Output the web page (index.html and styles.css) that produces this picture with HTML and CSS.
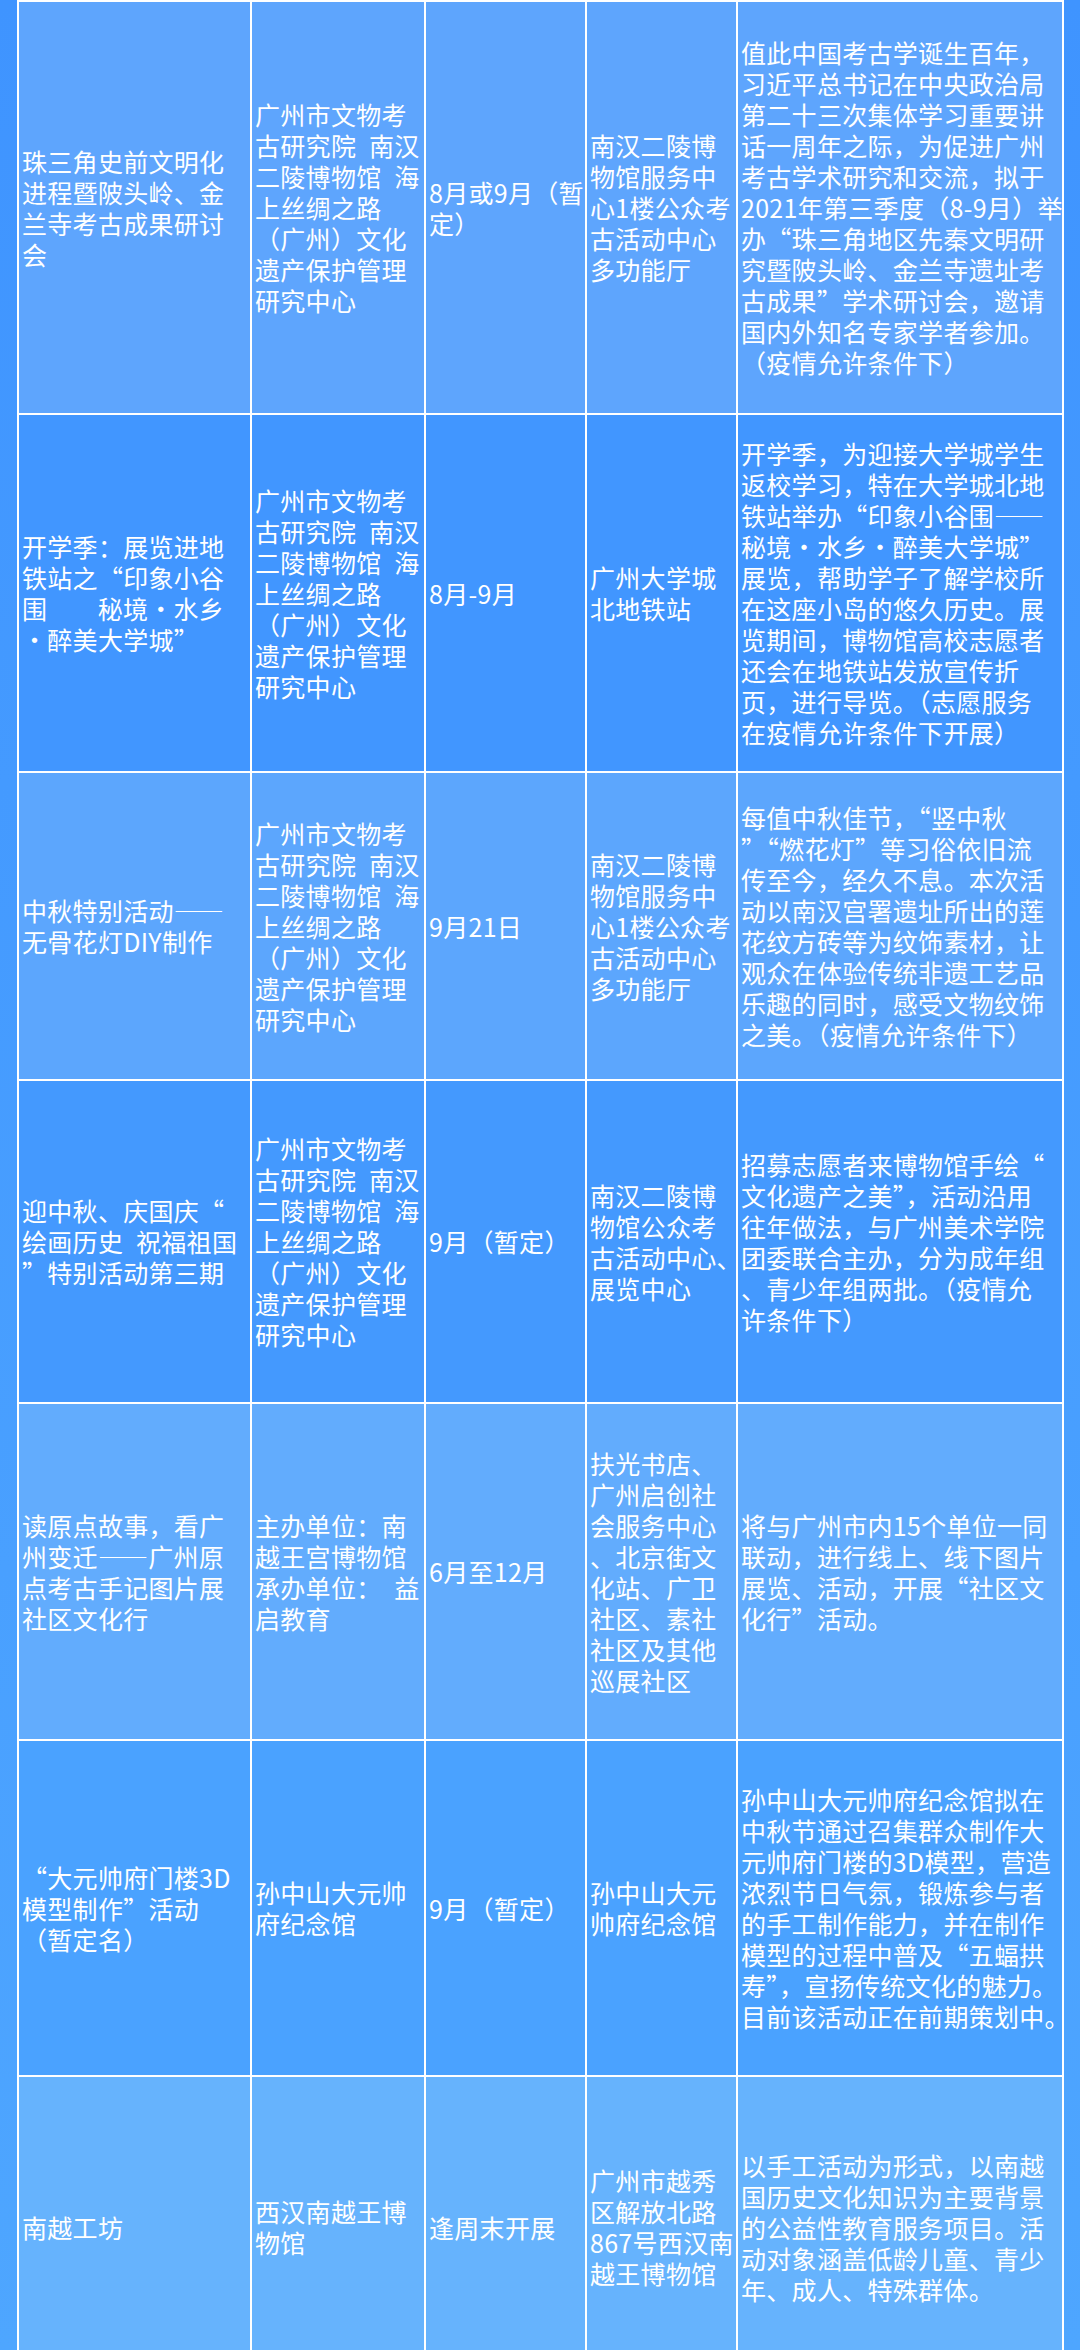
FILE: index.html
```html
<!DOCTYPE html>
<html lang="zh-CN">
<head>
<meta charset="utf-8">
<title>活动计划表</title>
<link rel="stylesheet" href="styles.css">
</head>
<body>
<div class="sheet">
  <div class="row r1">
    <div class="cell"><p>珠三角史前文明化<br>进程暨陂头岭、金<br>兰寺考古成果研讨<br>会</p></div>
    <div class="cell"><p>广州市文物考<br>古研究院&ensp;南汉<br>二陵博物馆&ensp;海<br>上丝绸之路<br>（广州）文化<br>遗产保护管理<br>研究中心</p></div>
    <div class="cell"><p>8月或9月（暂<br>定）</p></div>
    <div class="cell"><p>南汉二陵博<br>物馆服务中<br>心1楼公众考<br>古活动中心<br>多功能厅</p></div>
    <div class="cell"><p>值此中国考古学诞生百年，<br>习近平总书记在中央政治局<br>第二十三次集体学习重要讲<br>话一周年之际，为促进广州<br>考古学术研究和交流，拟于<br>2021年第三季度（8-9月）举<br>办“珠三角地区先秦文明研<br>究暨陂头岭、金兰寺遗址考<br>古成果”学术研讨会，邀请<br>国内外知名专家学者参加。<br>（疫情允许条件下）</p></div>
  </div>
  <div class="row r2">
    <div class="cell"><p>开学季：展览进地<br>铁站之“印象小谷<br>围<span class="blank">——</span>秘境・水乡<br>・醉美大学城”</p></div>
    <div class="cell"><p>广州市文物考<br>古研究院&ensp;南汉<br>二陵博物馆&ensp;海<br>上丝绸之路<br>（广州）文化<br>遗产保护管理<br>研究中心</p></div>
    <div class="cell"><p>8月-9月</p></div>
    <div class="cell"><p>广州大学城<br>北地铁站</p></div>
    <div class="cell"><p>开学季，为迎接大学城学生<br>返校学习，特在大学城北地<br>铁站举办“印象小谷围——<br>秘境・水乡・醉美大学城”<br>展览，帮助学子了解学校所<br>在这座小岛的悠久历史。展<br>览期间，博物馆高校志愿者<br>还会在地铁站发放宣传折<br>页，进行导览。（志愿服务<br>在疫情允许条件下开展）</p></div>
  </div>
  <div class="row r3">
    <div class="cell"><p>中秋特别活动——<br>无骨花灯DIY制作</p></div>
    <div class="cell"><p>广州市文物考<br>古研究院&ensp;南汉<br>二陵博物馆&ensp;海<br>上丝绸之路<br>（广州）文化<br>遗产保护管理<br>研究中心</p></div>
    <div class="cell"><p>9月21日</p></div>
    <div class="cell"><p>南汉二陵博<br>物馆服务中<br>心1楼公众考<br>古活动中心<br>多功能厅</p></div>
    <div class="cell"><p>每值中秋佳节，“竖中秋<br>”“燃花灯”等习俗依旧流<br>传至今，经久不息。本次活<br>动以南汉宫署遗址所出的莲<br>花纹方砖等为纹饰素材，让<br>观众在体验传统非遗工艺品<br>乐趣的同时，感受文物纹饰<br>之美。（疫情允许条件下）</p></div>
  </div>
  <div class="row r4">
    <div class="cell"><p>迎中秋、庆国庆“<br>绘画历史&ensp;祝福祖国<br>”特别活动第三期</p></div>
    <div class="cell"><p>广州市文物考<br>古研究院&ensp;南汉<br>二陵博物馆&ensp;海<br>上丝绸之路<br>（广州）文化<br>遗产保护管理<br>研究中心</p></div>
    <div class="cell"><p>9月（暂定）</p></div>
    <div class="cell"><p>南汉二陵博<br>物馆公众考<br>古活动中心、<br>展览中心</p></div>
    <div class="cell"><p>招募志愿者来博物馆手绘“<br>文化遗产之美”，活动沿用<br>往年做法，与广州美术学院<br>团委联合主办，分为成年组<br>、青少年组两批。（疫情允<br>许条件下）</p></div>
  </div>
  <div class="row r5">
    <div class="cell"><p>读原点故事，看广<br>州变迁——广州原<br>点考古手记图片展<br>社区文化行</p></div>
    <div class="cell"><p>主办单位：南<br>越王宫博物馆<br>承办单位：&ensp;益<br>启教育</p></div>
    <div class="cell"><p>6月至12月</p></div>
    <div class="cell"><p>扶光书店、<br>广州启创社<br>会服务中心<br>、北京街文<br>化站、广卫<br>社区、素社<br>社区及其他<br>巡展社区</p></div>
    <div class="cell"><p>将与广州市内15个单位一同<br>联动，进行线上、线下图片<br>展览、活动，开展“社区文<br>化行”活动。</p></div>
  </div>
  <div class="row r6">
    <div class="cell"><p>“大元帅府门楼3D<br>模型制作”活动<br>（暂定名）</p></div>
    <div class="cell"><p>孙中山大元帅<br>府纪念馆</p></div>
    <div class="cell"><p>9月（暂定）</p></div>
    <div class="cell"><p>孙中山大元<br>帅府纪念馆</p></div>
    <div class="cell"><p>孙中山大元帅府纪念馆拟在<br>中秋节通过召集群众制作大<br>元帅府门楼的3D模型，营造<br>浓烈节日气氛，锻炼参与者<br>的手工制作能力，并在制作<br>模型的过程中普及“五蝠拱<br>寿”，宣扬传统文化的魅力。<br>目前该活动正在前期策划中。</p></div>
  </div>
  <div class="row r7">
    <div class="cell"><p>南越工坊</p></div>
    <div class="cell"><p>西汉南越王博<br>物馆</p></div>
    <div class="cell"><p>逢周末开展</p></div>
    <div class="cell"><p>广州市越秀<br>区解放北路<br>867号西汉南<br>越王博物馆</p></div>
    <div class="cell"><p>以手工活动为形式，以南越<br>国历史文化知识为主要背景<br>的公益性教育服务项目。活<br>动对象涵盖低龄儿童、青少<br>年、成人、特殊群体。</p></div>
  </div>
</div>
</body>
</html>
```

FILE: styles.css
```css
html, body {
  margin: 0;
  padding: 0;
}

body {
  width: 1080px;
  height: 2350px;
  overflow: hidden;
  background: linear-gradient(to bottom, #3f94ff 0%, #4ea6ff 100%);
  font-family: "Noto Sans CJK SC", "Noto Sans CJK TC", sans-serif;
}

.sheet {
  display: grid;
  grid-template-columns: 231px 172px 159px 149px 324px;
  grid-template-rows: 411px 356px 306px 321px 335px 334px 300px;
  gap: 2px;
  padding: 2px;
  margin-left: 17px;
  width: fit-content;
  background: #ffffff;
}

.row {
  display: contents;
}

.cell {
  display: flex;
  align-items: center;
  padding: 0 3px;
  color: #ffffff;
  font-size: 25px;
  letter-spacing: 0.3px;
  line-height: 31px;
  white-space: nowrap;
}

.cell p {
  margin: 0;
}

.blank {
  visibility: hidden;
}

.r1 .cell { background: #5ea5fd; }
.r2 .cell { background: #4196ff; }
.r3 .cell { background: #5ca6fd; }
.r4 .cell { background: #4499fe; }
.r5 .cell { background: #62acfd; }
.r6 .cell { background: #4aa2ff; }
.r7 .cell { background: #66b3fd; }
```
